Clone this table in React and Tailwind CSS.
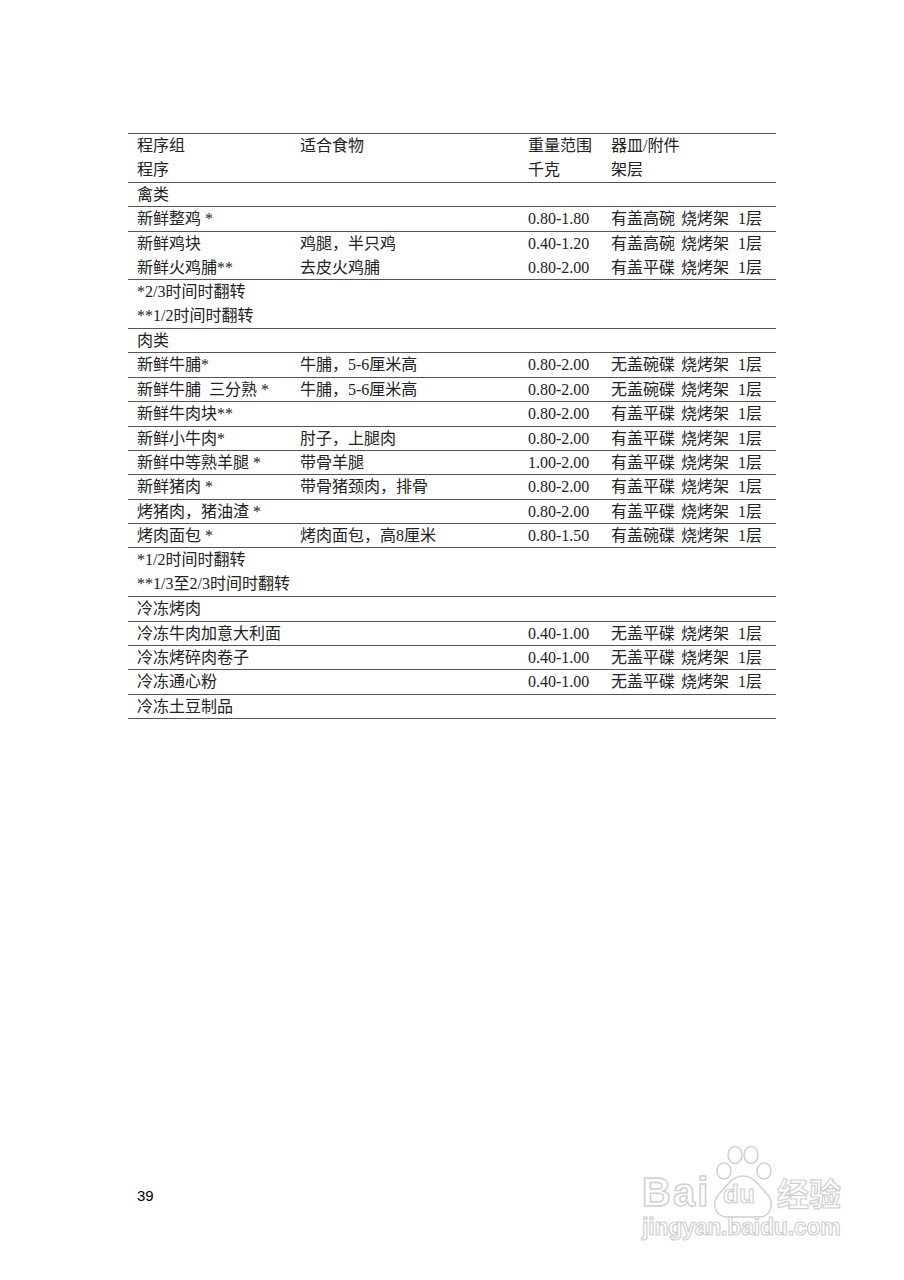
import React from 'react';

const font = 'font-["Liberation_Serif","Noto_Sans_CJK_SC",serif]';

// dish / accessory / shelf
const K = (a, b = '烧烤架', c = '1层') => [a, b, c];

const sections = [
  { head: true, lines: [['程序组', '适合食物', '重量范围', '器皿/附件'], ['程序', '', '千克', '架层']] },
  { lines: [['禽类']] },
  { lines: [['新鲜整鸡 *', '', '0.80-1.80', K('有盖高碗')]] },
  {
    lines: [
      ['新鲜鸡块', '鸡腿，半只鸡', '0.40-1.20', K('有盖高碗')],
      ['新鲜火鸡脯**', '去皮火鸡脯', '0.80-2.00', K('有盖平碟')],
    ],
  },
  { lines: [['*2/3时间时翻转'], ['**1/2时间时翻转']] },
  { lines: [['肉类']] },
  { lines: [['新鲜牛脯*', '牛脯，5-6厘米高', '0.80-2.00', K('无盖碗碟')]] },
  { lines: [['新鲜牛脯  三分熟 *', '牛脯，5-6厘米高', '0.80-2.00', K('无盖碗碟')]] },
  { lines: [['新鲜牛肉块**', '', '0.80-2.00', K('有盖平碟')]] },
  { lines: [['新鲜小牛肉*', '肘子，上腿肉', '0.80-2.00', K('有盖平碟')]] },
  { lines: [['新鲜中等熟羊腿 *', '带骨羊腿', '1.00-2.00', K('有盖平碟')]] },
  { lines: [['新鲜猪肉 *', '带骨猪颈肉，排骨', '0.80-2.00', K('有盖平碟')]] },
  { lines: [['烤猪肉，猪油渣 *', '', '0.80-2.00', K('有盖平碟')]] },
  { lines: [['烤肉面包 *', '烤肉面包，高8厘米', '0.80-1.50', K('有盖碗碟')]] },
  { lines: [['*1/2时间时翻转'], ['**1/3至2/3时间时翻转']] },
  { lines: [['冷冻烤肉']] },
  { lines: [['冷冻牛肉加意大利面', '', '0.40-1.00', K('无盖平碟')]] },
  { lines: [['冷冻烤碎肉卷子', '', '0.40-1.00', K('无盖平碟')]] },
  { lines: [['冷冻通心粉', '', '0.40-1.00', K('无盖平碟')]] },
  { lines: [['冷冻土豆制品']] },
];

const Line = ({ cells }) => {
  if (cells.length === 1) {
    return <div className="h-[24.375px] flex items-center pl-[9px] whitespace-pre">{cells[0]}</div>;
  }
  const last = cells[3];
  return (
    <div className="h-[24.375px] grid grid-cols-[163px_228px_83px_1fr] items-center pl-[9px] whitespace-pre">
      <span>{cells[0]}</span>
      <span>{cells[1]}</span>
      <span>{cells[2]}</span>
      {Array.isArray(last) ? (
        <span className="flex items-center">
          <span>{last[0]}</span>
          <span className="ml-[6px]">{last[1]}</span>
          <span className="ml-[9px]">{last[2]}</span>
        </span>
      ) : (
        <span>{last}</span>
      )}
    </div>
  );
};

const Watermark = () => (
  <div className="absolute left-[640px] top-[1138px] w-[215px] h-[105px] pointer-events-none">
    <div className="absolute left-[2px] top-[34px] text-[40px] leading-none font-bold text-white font-['Liberation_Sans',sans-serif] [-webkit-text-stroke:1.5px_#d0d0d0] tracking-[2px]">
      Bai
    </div>
    <svg className="absolute left-[70px] top-[6px]" width="66" height="76" viewBox="0 0 66 76" fill="white" stroke="#d0d0d0" strokeWidth="1.5">
      <ellipse cx="14" cy="27" rx="7" ry="8" />
      <ellipse cx="25" cy="11" rx="7" ry="8.5" />
      <ellipse cx="41" cy="11" rx="7" ry="8.5" />
      <ellipse cx="54" cy="27" rx="7" ry="8" />
      <path d="M33 32 C22 32 17 42 9 50 C1 59 5 73 17 73 L49 73 C61 73 65 59 57 50 C49 42 44 32 33 32 Z" />
    </svg>
    <div className="absolute left-[83px] top-[43px] text-[26px] leading-none font-bold text-white font-['Liberation_Sans',sans-serif] [-webkit-text-stroke:1.2px_#d0d0d0]">
      du
    </div>
    <div className="absolute left-[137px] top-[38px] text-[32px] leading-none font-bold text-white font-['Noto_Sans_CJK_SC',sans-serif] [-webkit-text-stroke:1.2px_#d0d0d0]">
      经验
    </div>
    <div className="absolute left-[2px] top-[78px] text-[23px] leading-none font-bold text-white font-['Liberation_Sans',sans-serif] [-webkit-text-stroke:1.2px_#d0d0d0] tracking-[-0.2px]">
      jingyan.baidu.com
    </div>
  </div>
);

export default function App() {
  return (
    <div className={`relative w-[904px] h-[1280px] bg-white text-[#222] text-[16px] ${font}`}>
      <div className="pt-[133px] pl-[128px] flex flex-col">
        <div className="w-[648px] border-t border-[#555]">
          {sections.map((s, i) => (
            <div
              key={i}
              className="border-b border-[#555] flex flex-col"
              style={{ height: `${s.lines.length * 24.375}px` }}
            >
              {s.lines.map((cells, j) => (
                <Line key={j} cells={cells} />
              ))}
            </div>
          ))}
        </div>
        <div className="mt-[469px] pl-[9px] text-[15px] leading-none text-black font-['Liberation_Sans',sans-serif]">
          39
        </div>
      </div>
      <Watermark />
    </div>
  );
}
